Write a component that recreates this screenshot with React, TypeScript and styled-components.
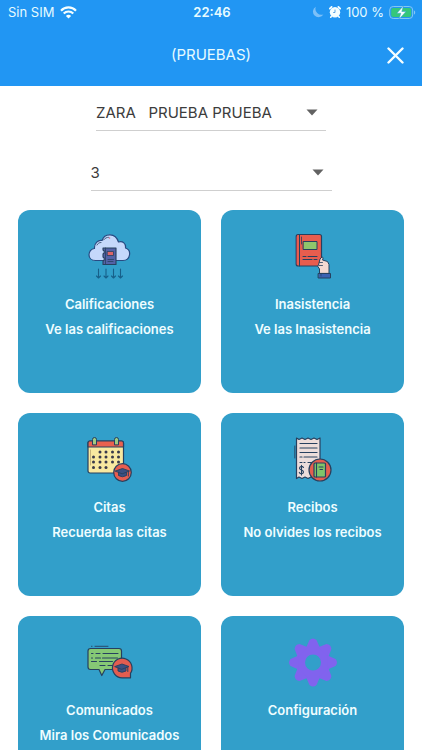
import React from "react";
import styled, { createGlobalStyle } from "styled-components";

const GlobalStyle = createGlobalStyle`
  * { box-sizing: border-box; }
  body {
    margin: 0;
    background: #fff;
    font-family: Inter, "Liberation Sans", sans-serif;
  }
`;

const Screen = styled.div`
  display: flex;
  flex-direction: column;
  height: 100vh;
`;

const Header = styled.header`
  flex: none;
  background: #2196f3;
  color: #e6fbff;
`;

const StatusBar = styled.div`
  display: grid;
  grid-template-columns: 1fr auto 1fr;
  align-items: center;
  height: 24px;
  padding: 0 6px 0 8px;
  font-size: 13px;
  line-height: 16px;
`;

const StatusGroup = styled.div<{ $end?: boolean }>`
  display: flex;
  align-items: center;
  justify-content: ${(p) => (p.$end ? "flex-end" : "flex-start")};
  gap: ${(p) => (p.$end ? "5px" : "6px")};
  white-space: nowrap;
`;

const Clock = styled.time`
  font-weight: 600;
`;

const TitleBar = styled.div`
  display: grid;
  grid-template-columns: 48px 1fr 48px;
  align-items: center;
  height: 62px;
  padding: 0 3px;
`;

const Title = styled.h1`
  grid-column: 2;
  margin: 0;
  text-align: center;
  font-size: 15px;
  line-height: 20px;
  font-weight: 400;
`;

const CloseButton = styled.button`
  display: flex;
  align-items: center;
  justify-content: center;
  height: 48px;
  padding: 0;
  border: 0;
  background: none;
  color: #f4feff;
  cursor: pointer;
`;

const Content = styled.main`
  flex: 1;
  min-height: 0;
  overflow-y: auto;
  scrollbar-width: none;
`;

const Filters = styled.form`
  display: flex;
  flex-direction: column;
  align-items: center;
  gap: 24px;
  padding: 9px 18px 19px;
`;

const SelectBox = styled.div<{ $width: number }>`
  position: relative;
  width: ${(p) => p.$width}px;
  max-width: 100%;
  border-bottom: 1px solid #cfcfcf;
`;

const Select = styled.select`
  display: block;
  width: 100%;
  height: 35px;
  padding: 0 28px 0 0;
  border: 0;
  border-radius: 0;
  appearance: none;
  background: transparent;
  color: #3c3c3c;
  font-family: inherit;
  font-size: 15px;
  line-height: 20px;
`;

const Caret = styled.svg`
  position: absolute;
  right: 8px;
  top: 14px;
  pointer-events: none;
`;

const CardGrid = styled.nav`
  display: grid;
  grid-template-columns: 1fr 1fr;
  gap: 20px;
  padding: 0 18px 20px;
`;

const Card = styled.button`
  display: flex;
  flex-direction: column;
  align-items: center;
  aspect-ratio: 1;
  padding: 15px 4px;
  border: 0;
  border-radius: 12px;
  background: #329fca;
  color: #effdff;
  font-family: inherit;
  font-size: 13px;
  line-height: 19px;
  font-weight: 600;
  cursor: pointer;
`;

const CardTitle = styled.span`
  margin-top: 10px;
`;

const CardText = styled.span`
  margin-top: 6px;
`;

const Art = styled.svg`
  flex: none;
  width: 60px;
  height: 60px;
`;

const NAVY = "#27405f";

const WifiIcon = () => (
  <svg width="17" height="13" viewBox="0 0 17 13" fill="none" stroke="#f4feff" strokeWidth="2.1" aria-label="Wi-Fi">
    <path d="M1 4.7C5 .3 12 .3 16 4.7" />
    <path d="M3.7 7.6c2.7-2.8 6.9-2.8 9.6 0" />
    <path d="M8.5 12.6 5.9 9.9c1.5-1.4 3.7-1.4 5.2 0z" fill="#f4feff" stroke="none" />
  </svg>
);

const MoonIcon = () => (
  <svg width="12" height="12" viewBox="0 0 12 12" aria-label="No molestar">
    <path d="M3.8.7A5.6 5.6 0 1 0 11.4 8.4 6 6 0 0 1 3.8.7z" fill="#7cc0f8" />
  </svg>
);

const AlarmIcon = () => (
  <svg width="12" height="12" viewBox="0 0 12 12" aria-label="Alarma">
    <path d="M.8 2.6 2.6.9M9.4.9l1.8 1.7" stroke="#f4feff" strokeWidth="1.8" strokeLinecap="round" />
    <circle cx="6" cy="6.2" r="5.2" fill="#f4feff" />
    <path d="M2.3 10.5l-.6.8M9.7 10.5l.6.8" stroke="#f4feff" strokeWidth="1.5" strokeLinecap="round" />
    <path d="M6 3.6v2.9H4.2" stroke="#5aa3e2" fill="none" />
  </svg>
);

const BatteryIcon = () => (
  <svg width="27" height="15" viewBox="0 0 27 15" aria-label="Cargando">
    <rect x=".7" y="1.5" width="23" height="12" rx="3.5" fill="none" stroke="#83c8f5" />
    <rect x="2.2" y="3" width="20" height="9" rx="2" fill="#35c77b" />
    <path d="M25 5.5c1.6.4 1.6 3.6 0 4z" fill="#83c8f5" />
    <path d="M14.5.8 7.8 8.2h4L10 14.2l7-7.7h-4.2z" fill="#f8ffff" stroke="#2f9fd0" strokeWidth=".5" />
  </svg>
);

const CloseIcon = () => (
  <svg width="17" height="17" viewBox="0 0 17 17" aria-hidden="true">
    <path d="M1.5 1.5l14 14M15.5 1.5l-14 14" stroke="currentColor" strokeWidth="2.4" strokeLinecap="round" />
  </svg>
);

const GradesArt = () => (
  <Art viewBox="0 0 60 60" aria-hidden="true" fill="none" stroke={NAVY} strokeLinecap="round" strokeLinejoin="round">
    <path d="M15.5 35.5C6.5 35.5 7.5 24 14.5 23.5 14 18 18.5 14.5 22 15.5 24.5 8 35.5 7.5 38.5 17c4.500-1.500 7.500 2 7 6 6.500 2 5 12.500-2.500 12.500z" fill="#c5d8fb" stroke="#284b83" strokeWidth="1.2" />
    <path d="M17 20c1-2 2.5-2.5 4-2.5M23.500 15c1.500-2 3.500-2.700 5-2.700" strokeWidth=".8" />
    <circle cx="29.5" cy="13" r=".8" fill="#d36b83" stroke="none" />
    <path d="M23 23h13v16.5H23v-3.500l1.200-1v-2L23 32v-3l1.200-1v-2L23 25z" fill="#5362a7" strokeWidth="1.1" />
    <path d="M25.500 23v16" strokeWidth=".8" />
    <rect x="27.5" y="26.5" width="6" height="4" fill="#dc6568" strokeWidth=".8" />
    <path d="M28 34.500h5.500M28 36.500h5" strokeWidth=".8" />
    <path d="M18.500 44v9m-2-2 2 2 2-2M26 44v9m-2-2 2 2 2-2M33.500 44v9m-2-2 2 2 2-2M40.500 44v9m-2-2 2 2 2-2" stroke="#17608a" strokeWidth="1.1" />
  </Art>
);

const AbsenceArt = () => (
  <Art viewBox="0 0 60 60" aria-hidden="true" fill="none" stroke={NAVY} strokeLinecap="round" strokeLinejoin="round">
    <path d="M15 9.5h21.500q2 0 2 2v27.500q0 2-2 2H15q-1.800 0-1.800-2V11.500q0-2 1.800-2z" fill="#e85d4e" strokeWidth="1.2" />
    <path d="M16.500 10v31" strokeWidth="1" />
    <path d="M13.500 12v27" stroke="#823e55" strokeWidth="1" />
    <path d="M18.500 12v7" strokeWidth=".8" />
    <rect x="20.5" y="16.5" width="13.5" height="8" fill="#8fc66c" strokeWidth="1" />
    <path d="M20 31.500h3m2 0h9M20 34.500h9m2 0h3" strokeWidth="1" />
    <path d="M36.500 48v-4l-2-3 1-1 1.500-6 2-2c1.500 0 1 2 .5 3l5 1.500 1.500 3V48z" fill="#f4d9d1" strokeWidth="1" />
    <path d="M36.500 37.500h3m-3.500 3h3.500" strokeWidth=".8" />
    <path d="M35.500 48.500h12v4.500h-12z" fill="#3b62b2" strokeWidth="1" />
    <path d="M38 49v2" strokeWidth=".7" />
  </Art>
);

const MortarBoard = ({ x, y }: { x: number; y: number }) => (
  <g transform={`translate(${x} ${y})`}>
    <path d="M-4-1v4q4 2.500 8 0v-4" fill="#3c5082" strokeWidth=".9" />
    <path d="M-7-1.500 0-4l7 2.500L0 1.200z" fill="#3c5082" strokeWidth=".9" />
    <path d="M5.800-1v4.500" strokeWidth="1" />
  </g>
);

const calendarDots = [
  [20, 22], [26, 22], [32.5, 22], [38.5, 22],
  [13.5, 27], [20, 27], [26, 27], [32.5, 27], [38.5, 27],
  [13.5, 32], [20, 32], [26, 32], [32.5, 32], [38.5, 32],
  [13.5, 37.5], [20, 37.5], [26, 37.5],
];

const CalendarArt = () => (
  <Art viewBox="0 -2 60 60" aria-hidden="true" fill="none" stroke={NAVY} strokeLinecap="round" strokeLinejoin="round">
    <rect x="8" y="11" width="35.5" height="32" rx="2" fill="#f8e8a0" strokeWidth="1.2" />
    <path d="M8 17v-4q0-2 2-2h31.500q2 0 2 2v4z" fill="#e9614f" strokeWidth="1.2" />
    <path d="M12.500 14.500v-5q0-2 2-2t2 2v5zM34.500 14.500v-5q0-2 2-2t2 2v5z" fill="#9fcb83" strokeWidth="1" />
    <path d="M10.500 20v15" stroke="#b9a471" strokeWidth=".8" />
    {calendarDots.map(([cx, cy]) => (
      <circle key={`${cx}-${cy}`} cx={cx} cy={cy} r="1.5" fill="#38384a" stroke="none" />
    ))}
    <circle cx="42.5" cy="42.5" r="8.8" fill="#e75d4f" strokeWidth="1.2" />
    <MortarBoard x={42.5} y={42.5} />
  </Art>
);

const ReceiptArt = () => (
  <Art viewBox="1 -2 60 60" aria-hidden="true" fill="none" stroke={NAVY} strokeLinecap="round" strokeLinejoin="round">
    <path d="M14.500 8l2.500 1.500L20 8l3 1.500L26 8l3 1.500L32 8l3 1.500L38 8v40.500L35 47l-3 1.500L29 47l-3 1.500L23 47l-3 1.500L17 47l-2.500 1.500z" fill="#ecdcda" strokeWidth="1.2" />
    <path d="M12.800 16v12" strokeWidth=".9" />
    <path d="M18 13.500h17M18 18h17M18 22.500h17M18 27h2m2 0h13M18 32.500h2m2 0h1m3 0h9" strokeWidth="1.2" />
    <path d="M21.500 37.500c-1.200-1.800-4-1.200-4 .7 0 2.300 4 1.300 4 3.800 0 2-3.200 2.400-4.200.4m2.200-7v9.600" strokeWidth="1.1" />
    <circle cx="38" cy="40" r="11" fill="#e35f4f" strokeWidth="1.2" />
    <rect x="32" y="33" width="11.5" height="14" rx="1" fill="#80c56a" strokeWidth="1.2" />
    <path d="M34.500 33v14M37 37h4M38 39.500h2.500" strokeWidth="1.1" />
  </Art>
);

const MessagesArt = () => (
  <Art viewBox="0 -4 60 60" aria-hidden="true" fill="none" stroke={NAVY} strokeLinecap="round" strokeLinejoin="round">
    <path d="M10.500 13.500H39q2.500 0 2.500 2.500v16q0 2.500-2.500 2.500H25L21.800 40.500 19 34.500h-8.500Q8 34.500 8 32V16q0-2.500 2.500-2.500z" fill="#86c875" strokeWidth="1.2" />
    <path d="M11.500 11.300h.5m3 0h13" strokeWidth=".9" />
    <path d="M11.500 18.500h1.500m3 0h4m3 0h15M11.500 23h1m3 0h5m2 0h15M11.500 26.500h5m3 0h13M20 30.500h5m3 0h5" strokeWidth="1.1" />
    <path d="M50.500 42.800H42a9.800 9.800 0 1 1 8.500-4.500z" fill="#e35d50" strokeWidth="1.2" />
    <MortarBoard x={42} y={33} />
  </Art>
);

const SettingsArt = () => (
  <Art viewBox="0 1 60 60" aria-hidden="true">
    <g fill="#8163ee">
      <path fillRule="evenodd" d="M30 15.500a17 17 0 1 0 0 34 17 17 0 0 0 0-34zm0 9a8 8 0 1 1 0 16 8 8 0 0 1 0-16z" />
      {[0, 45, 90, 135, 180, 225, 270, 315].map((angle) => (
        <path key={angle} d="M23 18 26.500 10q3.500-3 7 0l3.500 8z" transform={`rotate(${angle} 30 32.500)`} />
      ))}
    </g>
  </Art>
);

const cards = [
  { title: "Calificaciones", text: "Ve las calificaciones", Icon: GradesArt },
  { title: "Inasistencia", text: "Ve las Inasistencia", Icon: AbsenceArt },
  { title: "Citas", text: "Recuerda las citas", Icon: CalendarArt },
  { title: "Recibos", text: "No olvides los recibos", Icon: ReceiptArt },
  { title: "Comunicados", text: "Mira los Comunicados", Icon: MessagesArt },
  { title: "Configuración", text: "", Icon: SettingsArt },
];

const Dropdown = ({ label, value, width }: { label: string; value: string; width: number }) => (
  <SelectBox $width={width}>
    <Select aria-label={label} defaultValue={value}>
      <option value={value}>{value}</option>
    </Select>
    <Caret width="12" height="7" viewBox="0 0 12 7" aria-hidden="true">
      <path d="M.5.5h11L6 6.500z" fill="#626262" />
    </Caret>
  </SelectBox>
);

export default function App() {
  return (
    <>
      <GlobalStyle />
      <Screen>
        <Header>
          <StatusBar>
            <StatusGroup>
              <span>Sin SIM</span>
              <WifiIcon />
            </StatusGroup>
            <Clock>22:46</Clock>
            <StatusGroup $end>
              <MoonIcon />
              <AlarmIcon />
              <span>100 %</span>
              <BatteryIcon />
            </StatusGroup>
          </StatusBar>
          <TitleBar>
            <Title>(PRUEBAS)</Title>
            <CloseButton type="button" aria-label="Cerrar">
              <CloseIcon />
            </CloseButton>
          </TitleBar>
        </Header>
        <Content>
          <Filters>
            <Dropdown label="Alumno" value={"ZARA\u00a0\u00a0\u00a0PRUEBA PRUEBA"} width={230} />
            <Dropdown label="Periodo" value="3" width={241} />
          </Filters>
          <CardGrid aria-label="Secciones">
            {cards.map(({ title, text, Icon }) => (
              <Card type="button" key={title}>
                <Icon />
                <CardTitle>{title}</CardTitle>
                {text && <CardText>{text}</CardText>}
              </Card>
            ))}
          </CardGrid>
        </Content>
      </Screen>
    </>
  );
}
